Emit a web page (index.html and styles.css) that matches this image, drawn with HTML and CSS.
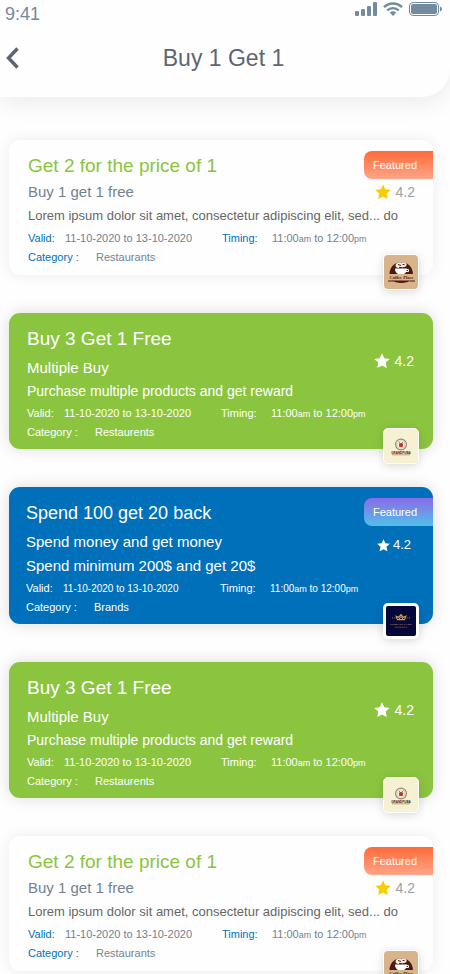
FILE: index.html
```html
<!DOCTYPE html>
<html lang="en">
<head>
    <meta charset="UTF-8">
    <meta name="viewport" content="width=device-width, initial-scale=1.0">
    <title>Buy 1 Get 1</title>
    <link rel="stylesheet" href="styles.css">
</head>
<body>
<!-- shared icons -->
<svg class="sprite" aria-hidden="true">
    <symbol id="star" viewBox="0 0 16 16">
        <path d="M8 .3l2.300 5 5.500.6-4.100 3.700 1.100 5.500L8 12.500l-4.800 2.600 1.100-5.500L.2 5.900l5.500-.6z"/>
    </symbol>
    <symbol id="logo-coffee" viewBox="0 0 34 34">
        <rect width="34" height="34" fill="#d9b48a"/>
        <path d="M5.500 19a11.700 12 0 0 1 23.400 0z" fill="#4d1a10"/>
        <path d="M8 25.500h18.500a11 5.500 0 0 1-18.500 0z" fill="#4d1a10"/>
        <path d="M11 13.500h12c0 4-2.500 6-6 6s-6-2-6-6z" fill="#fff"/>
        <path d="M22 14.500h2.500v2H22" fill="none" stroke="#fff"/>
        <path d="M11.500 10.500c0-3 4-4 6-3 3-1 6 1 5 3-1 2-3 1-4 2-2 .8-7 1-7-2z" fill="#f4ebe2"/>
        <path d="M14 9.500l3 1M18.500 9.500h2M15 12.500h3" stroke="#4d1a10"/>
        <path d="M4 20.500q13.500-3 27 0v4.500q-13.500-2-27 0l2-2.300z" fill="#d9b48a"/>
        <path d="M4 26h5M26 26h5" stroke="#4d1a10"/>
        <text x="17.500" y="24" text-anchor="middle" font-size="4.500" font-weight="bold" font-family="Liberation Serif, serif" fill="#4d1a10">Coffee Place</text>
    </symbol>
    <symbol id="logo-grand" viewBox="0 0 34 34">
        <rect width="34" height="34" fill="#f6f1d3"/>
        <circle cx="17" cy="15.500" r="5.400" fill="none" stroke="#9a8676" stroke-width="1.200"/>
        <circle cx="17" cy="15.500" r="3.800" fill="#fff8e8" stroke="#c5ab91" stroke-width=".5"/>
        <path d="M14.800 14.500h4.400l-.5 3.400h-3.400z" fill="#c9302c"/>
        <path d="M15.300 13.200l1.700 2 1.700-2" fill="none" stroke="#3c7a38"/>
        <text x="17" y="24.600" text-anchor="middle" font-size="3" font-weight="bold" font-family="Liberation Sans, sans-serif" fill="#2f2320">GRANDPUBA</text>
        <path d="M8 25.800h18" stroke="#c47a6e" stroke-width=".8"/>
    </symbol>
    <symbol id="logo-company" viewBox="0 0 34 34">
        <rect width="34" height="34" fill="#06063a"/>
        <path d="M13 15.500l-1.500-4 3 1.200 2.500-3 2.500 3 3-1.200-1.500 4z" fill="none" stroke="#d39a4c" stroke-width="1.300"/>
        <path d="M14.500 15l2.500-3 2.500 3" fill="none" stroke="#f0bd6a"/>
        <path d="M7 13.500h1M9.500 13.500h1M23.500 13.500h1M26 13.500h1" stroke="#d39a4c"/>
        <text x="17" y="21.500" text-anchor="middle" font-size="3" font-weight="bold" font-family="Liberation Serif, serif" fill="#d0954f">COMPANY NAME</text>
        <path d="M10 24h14" stroke="#8f6c4c" stroke-width=".8" stroke-dasharray="2 .5"/>
    </symbol>
</svg>

<header class="header">
    <div class="status-bar">
        <span class="time">9:41</span>
        <div class="status-icons">
            <svg width="22" height="14" viewBox="0 0 22 14" fill="#738a9f">
                <rect x="0" y="9" width="4" height="5" rx="1"/>
                <rect x="6" y="7" width="4" height="7" rx="1"/>
                <rect x="12" y="4" width="4" height="10" rx="1"/>
                <rect x="18" y="0" width="4" height="14" rx="1"/>
            </svg>
            <svg width="20" height="14" viewBox="0 0 20 14" fill="none" stroke="#738a9f" stroke-width="2.400">
                <path d="M1 5.200a12.800 12.800 0 0 1 18 0"/>
                <path d="M4.200 8.500a8.300 8.300 0 0 1 11.600 0"/>
                <path d="M6.800 10.600a4.600 4.600 0 0 1 6.400 0L10 13.900z" fill="#738a9f" stroke="none"/>
            </svg>
            <svg width="33" height="14" viewBox="0 0 33 14" fill="#738a9f">
                <rect x=".5" y=".5" width="29" height="13" rx="3.500" fill="none" stroke="#738a9f"/>
                <rect x="2" y="2" width="26" height="10" rx="2"/>
                <path d="M31 4.500q2 .8 2 2.500t-2 2.500z"/>
            </svg>
        </div>
    </div>
    <div class="title-bar">
        <button class="back" aria-label="Back">
            <svg width="13" height="22" viewBox="0 0 13 22" fill="none" stroke="#5c6672" stroke-width="3.400">
                <path d="M11.500 1.500L2.500 11l9 9.500"/>
            </svg>
        </button>
        <h1>Buy 1 Get 1</h1>
    </div>
</header>

<main class="offers">
    <article class="card white">
        <span class="badge">Featured</span>
        <div class="card-head">
            <div>
                <h2>Get 2 for the price of 1</h2>
                <h3>Buy 1 get 1 free</h3>
            </div>
            <div class="rating"><svg><use href="#star"/></svg>4.2</div>
        </div>
        <p class="desc">Lorem ipsum dolor sit amet, consectetur adipiscing elit, sed... do</p>
        <div class="info">
            <span class="label valid">Valid:</span>
            <span class="date">11-10-2020 to 13-10-2020</span>
            <span class="label timing">Timing:</span>
            <span class="hours">11:00<small>am</small> to 12:00<small>pm</small></span>
        </div>
        <div class="info">
            <span class="label category">Category :</span>
            <span>Restaurants</span>
        </div>
        <svg class="logo"><use href="#logo-coffee"/></svg>
    </article>

    <article class="card green">
        <div class="card-head">
            <div>
                <h2>Buy 3 Get 1 Free</h2>
                <h3>Multiple Buy</h3>
            </div>
            <div class="rating"><svg><use href="#star"/></svg>4.2</div>
        </div>
        <p class="desc">Purchase multiple products and get reward</p>
        <div class="info">
            <span class="label valid">Valid:</span>
            <span class="date">11-10-2020 to 13-10-2020</span>
            <span class="label timing">Timing:</span>
            <span class="hours">11:00<small>am</small> to 12:00<small>pm</small></span>
        </div>
        <div class="info">
            <span class="label category">Category :</span>
            <span>Restaurents</span>
        </div>
        <svg class="logo"><use href="#logo-grand"/></svg>
    </article>

    <article class="card blue">
        <span class="badge">Featured</span>
        <div class="card-head">
            <div>
                <h2>Spend 100 get 20 back</h2>
                <h3>Spend money and get money</h3>
            </div>
            <div class="rating"><svg><use href="#star"/></svg>4.2</div>
        </div>
        <p class="desc">Spend minimum 200$ and get 20$</p>
        <div class="info">
            <span class="label valid">Valid:</span>
            <span class="date">11-10-2020 to 13-10-2020</span>
            <span class="label timing">Timing:</span>
            <span class="hours">11:00<small>am</small> to 12:00<small>pm</small></span>
        </div>
        <div class="info">
            <span class="label category">Category :</span>
            <span>Brands</span>
        </div>
        <svg class="logo"><use href="#logo-company"/></svg>
    </article>

    <article class="card green">
        <div class="card-head">
            <div>
                <h2>Buy 3 Get 1 Free</h2>
                <h3>Multiple Buy</h3>
            </div>
            <div class="rating"><svg><use href="#star"/></svg>4.2</div>
        </div>
        <p class="desc">Purchase multiple products and get reward</p>
        <div class="info">
            <span class="label valid">Valid:</span>
            <span class="date">11-10-2020 to 13-10-2020</span>
            <span class="label timing">Timing:</span>
            <span class="hours">11:00<small>am</small> to 12:00<small>pm</small></span>
        </div>
        <div class="info">
            <span class="label category">Category :</span>
            <span>Restaurents</span>
        </div>
        <svg class="logo"><use href="#logo-grand"/></svg>
    </article>

    <article class="card white">
        <span class="badge">Featured</span>
        <div class="card-head">
            <div>
                <h2>Get 2 for the price of 1</h2>
                <h3>Buy 1 get 1 free</h3>
            </div>
            <div class="rating"><svg><use href="#star"/></svg>4.2</div>
        </div>
        <p class="desc">Lorem ipsum dolor sit amet, consectetur adipiscing elit, sed... do</p>
        <div class="info">
            <span class="label valid">Valid:</span>
            <span class="date">11-10-2020 to 13-10-2020</span>
            <span class="label timing">Timing:</span>
            <span class="hours">11:00<small>am</small> to 12:00<small>pm</small></span>
        </div>
        <div class="info">
            <span class="label category">Category :</span>
            <span>Restaurants</span>
        </div>
        <svg class="logo"><use href="#logo-coffee"/></svg>
    </article>
</main>
</body>
</html>
```
FILE: styles.css
```css
* {
    box-sizing: border-box;
}
body {
    margin: 0;
    font-family: "Liberation Sans", Arial, sans-serif;
    background-color: #fefefe;
}
h1, h2, h3, p {
    margin: 0;
    font-weight: normal;
}
.sprite {
    display: none;
}

/* Header */
.header {
    background-color: #fefefe;
    border-bottom-right-radius: 28px;
    box-shadow: 0 6px 24px rgba(0, 0, 0, 0.08);
    padding-bottom: 23px;
}
.status-bar {
    display: flex;
    justify-content: space-between;
    align-items: flex-start;
    padding: 2px 8px 0 5px;
}
.time {
    font-size: 18px;
    line-height: 24px;
    color: #738a9f;
}
.status-icons {
    display: flex;
    gap: 6px;
}
.title-bar {
    display: grid;
    grid-template-columns: 40px 1fr 40px;
    align-items: center;
    padding: 16px 9px 0 6px;
}
.back {
    display: flex;
    padding: 0;
    border: none;
    background: none;
    cursor: pointer;
}
h1 {
    font-size: 23px;
    line-height: 32px;
    text-align: center;
    color: #5c6672;
}

/* Cards */
.offers {
    display: flex;
    flex-direction: column;
    gap: 38px;
    padding: 43px 17px 3px 9px;
}
.card {
    position: relative;
    padding: 13px 18px 8px 19px;
    border-radius: 11px;
    box-shadow: 0 0 16px rgba(0, 0, 0, 0.14);
    color: #fff;
}
.card-head {
    display: flex;
    justify-content: space-between;
    align-items: flex-start;
}
h2 {
    font-size: 19px;
    line-height: 26px;
    margin-bottom: 4px;
}
h3 {
    font-size: 15px;
    line-height: 24px;
}
.desc {
    font-size: 14px;
    line-height: 22px;
    margin-bottom: 2px;
    white-space: nowrap;
}
.info {
    display: flex;
    font-size: 11px;
    line-height: 19px;
    white-space: nowrap;
}
.info small {
    font-size: 9px;
    line-height: 1;
}
.valid {
    width: 37px;
}
.date {
    width: 157px;
}
.timing {
    width: 50px;
}
.category {
    width: 68px;
}
.rating {
    display: flex;
    align-items: center;
    gap: 5px;
    margin-top: 25px;
    font-size: 14px;
    line-height: 20px;
}
.rating svg {
    width: 16px;
    height: 16px;
    fill: #fff;
}
.badge {
    position: absolute;
    top: 11px;
    right: 0;
    padding: 0 16px 0 9px;
    border-radius: 8px 0 0 8px;
    font-size: 11px;
    line-height: 28px;
    background: linear-gradient(#ff6b3a, #ffa588);
}
.logo {
    position: absolute;
    right: 14px;
    bottom: -15px;
    width: 36px;
    height: 36px;
    border: 1px solid #fff;
    border-radius: 5px;
    background-color: #fff;
    box-shadow: 0 2px 10px rgba(0, 0, 0, 0.15);
}

.white {
    background-color: #fefefe;
    color: #738192;
    box-shadow: 0 0 14px rgba(0, 0, 0, 0.08);
}
.white h2 {
    margin-bottom: 0;
    color: #8ac53e;
}
.white h3 {
    line-height: 26px;
}
.white .desc {
    font-size: 13px;
    color: #666;
}
.white .label {
    color: #0070ba;
}
.white .rating {
    margin-top: 29px;
    color: #a0a0a0;
}
.white .rating svg {
    fill: #f8cd05;
}
.white .badge {
    color: #fff;
}

.green {
    padding: 13px 19px 7px 18px;
    background-color: #8bc53f;
}

.blue {
    padding: 13px 22px 7px 17px;
    background-color: #0070ba;
}
.blue h2 {
    font-size: 18px;
}
.blue .desc {
    font-size: 15px;
}
.blue .date, .blue .hours {
    font-size: 10px;
}
.blue .rating {
    gap: 3px;
    margin-top: 35px;
    font-size: 13px;
}
.blue .rating svg {
    width: 13px;
    height: 13px;
}
.blue .badge {
    background: linear-gradient(#8a6be8, #51c0e8);
}
.blue .logo {
    border-width: 3px;
}
```
